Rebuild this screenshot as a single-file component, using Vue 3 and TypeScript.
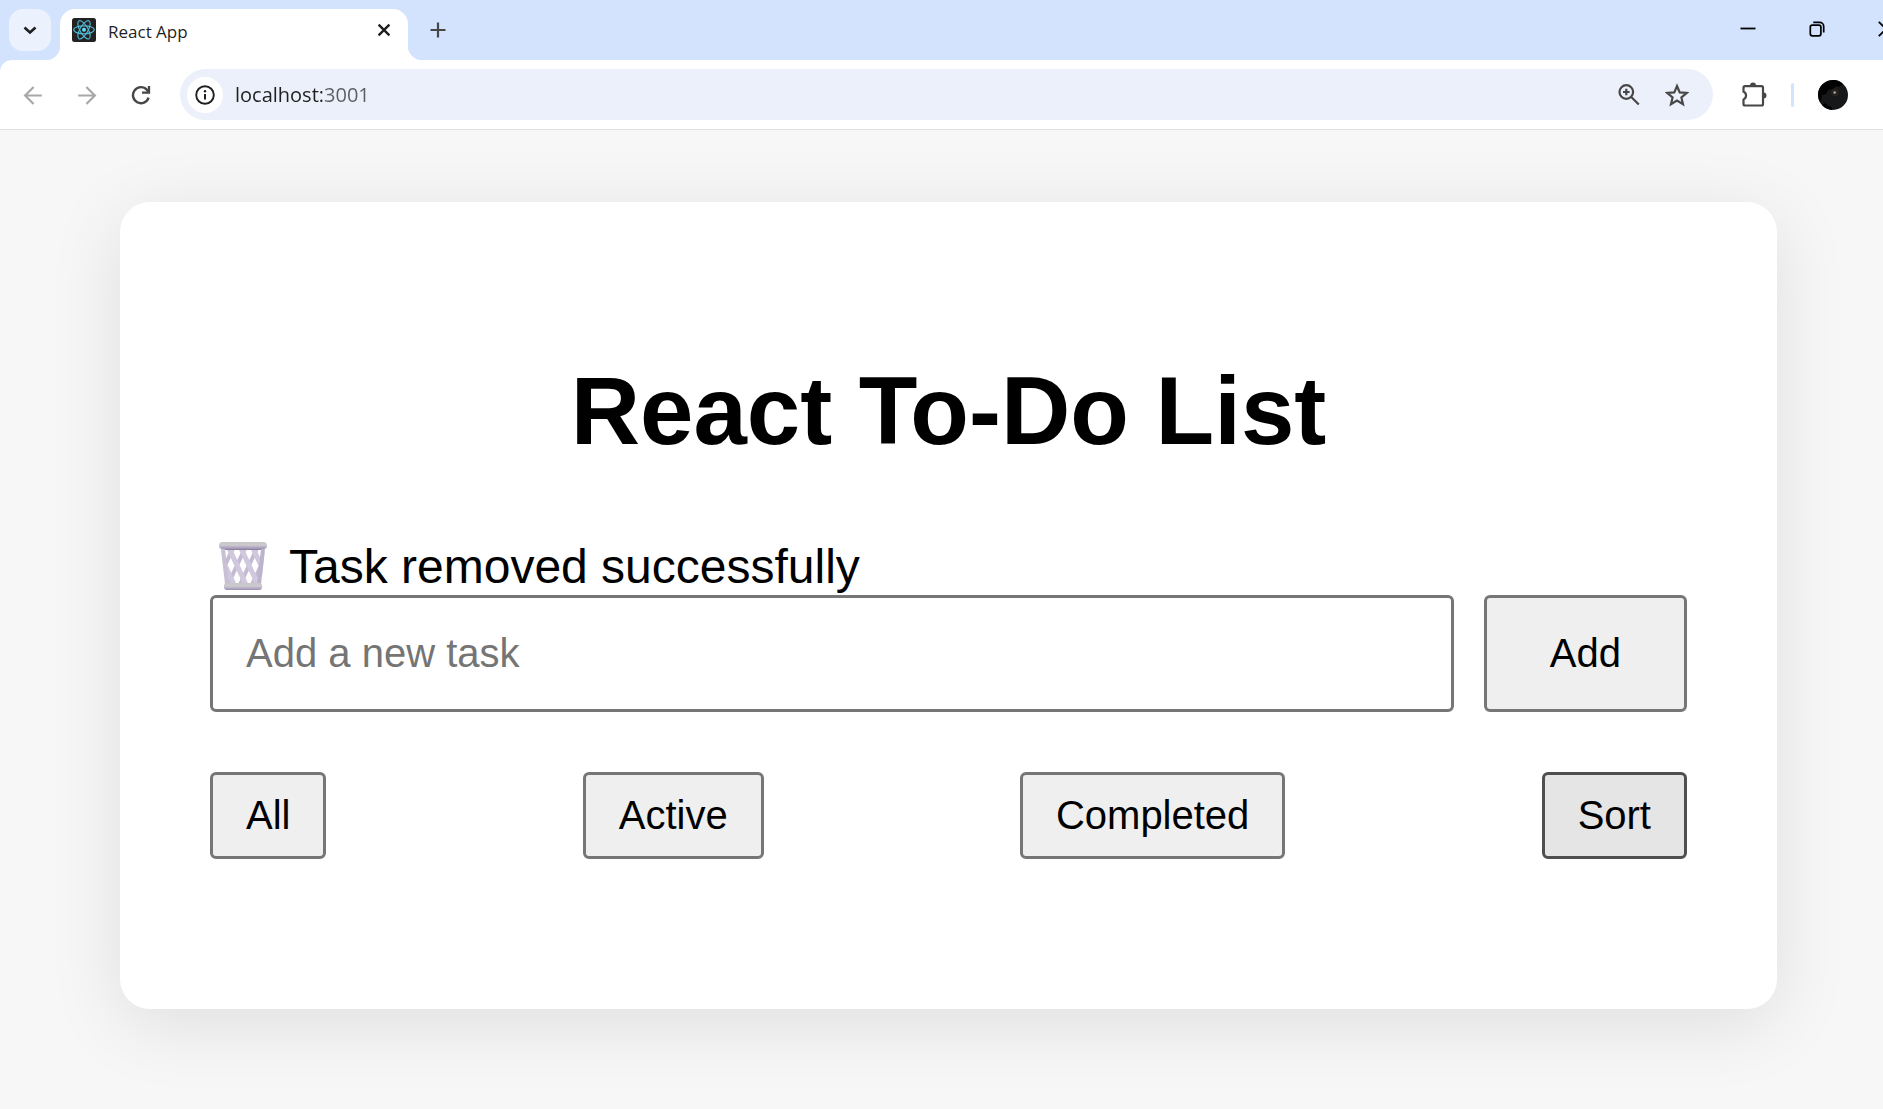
<script setup lang="ts">
import { ref } from 'vue'

type Filter = 'All' | 'Active' | 'Completed' | 'Sort'

const filters: Filter[] = ['All', 'Active', 'Completed', 'Sort']
const current = ref<Filter>('Sort')
const draft = ref('')
const address = ref('localhost:3001')

// Start positions of the crossing wires in the wastebasket mesh
const wires = [6, 18, 30, 42]
</script>

<template>
  <div class="window">
    <header class="tabstrip">
      <button class="tab-search" aria-label="Search tabs">
        <svg width="14" height="14" viewBox="0 0 14 14"><path d="M1.5 4.500l5.500 5 5.500-5" fill="none" stroke="#1f1f1f" stroke-width="2.6" /></svg>
      </button>
      <div class="tab">
        <svg class="favicon" width="24" height="24" viewBox="0 0 24 24">
          <rect width="24" height="24" rx="2.5" fill="#222" />
          <g fill="none" stroke="#50b9d3" stroke-width="1.15">
            <ellipse cx="12" cy="11.8" rx="10.3" ry="4" />
            <ellipse cx="12" cy="11.8" rx="10.3" ry="4" transform="rotate(60 12 11.8)" />
            <ellipse cx="12" cy="11.8" rx="10.3" ry="4" transform="rotate(120 12 11.8)" />
          </g>
          <circle cx="12" cy="11.8" r="2" fill="#61dafb" />
        </svg>
        <span class="tab-title">React App</span>
        <button class="icon-btn tab-close" aria-label="Close tab">
          <svg width="14" height="14" viewBox="0 0 14 14"><path d="M1.600 1.600l10.800 10.800M12.400 1.600L1.600 12.400" stroke="#1f1f1f" stroke-width="2.400" /></svg>
        </button>
      </div>
      <button class="icon-btn new-tab" aria-label="New tab">
        <svg width="16" height="16" viewBox="0 0 16 16"><path d="M8 .5v15M.5 8h15" stroke="#474747" stroke-width="2.2" /></svg>
      </button>
      <div class="controls">
        <button class="control" aria-label="Minimize">
          <svg width="16" height="16" viewBox="0 0 16 16"><path d="M.5 7.500h15" stroke="#000" stroke-width="1.8" /></svg>
        </button>
        <button class="control" aria-label="Restore">
          <svg width="16" height="16" viewBox="0 0 16 16" fill="none" stroke="#000" stroke-width="1.7">
            <rect x="1.3" y="4.2" width="10.6" height="10.6" rx="2" />
            <path d="M4.3 1.4h6.4a4 4 0 0 1 4 4v6.2" />
          </svg>
        </button>
        <button class="control" aria-label="Close">
          <svg width="16" height="16" viewBox="0 0 16 16"><path d="M.8.8l14.4 14.4M15.2.8L.8 15.2" stroke="#000" stroke-width="1.8" /></svg>
        </button>
      </div>
    </header>

    <nav class="toolbar">
      <button class="icon-btn nav-btn" aria-label="Back">
        <svg width="20" height="20" viewBox="0 0 20 20"><path d="M18.800 10.500H2.500M10.600 2l-8.500 8.500 8.500 8.500" fill="none" stroke="#a8a8a8" stroke-width="2.200" /></svg>
      </button>
      <button class="icon-btn nav-btn" aria-label="Forward">
        <svg width="20" height="20" viewBox="0 0 20 20"><path d="M1.200 10.500h16.300M9.400 2l8.500 8.500-8.500 8.500" fill="none" stroke="#a8a8a8" stroke-width="2.200" /></svg>
      </button>
      <button class="icon-btn nav-btn" aria-label="Reload">
        <svg width="20" height="20" viewBox="0 0 20 20">
          <path d="M17.600 12.600A8 8 0 1 1 16 4.900l1.600 1.800" fill="none" stroke="#474747" stroke-width="2.400" />
          <path d="M18 1V7.600h-7" fill="none" stroke="#474747" stroke-width="2.300" />
        </svg>
      </button>
      <div class="omnibox">
        <button class="site-info" aria-label="View site information">
          <svg width="20" height="20" viewBox="0 0 20 20">
            <circle cx="10" cy="10" r="8.800" fill="none" stroke="#1f1f1f" stroke-width="1.900" />
            <path d="M10 9v5.600" stroke="#1f1f1f" stroke-width="2" />
            <circle cx="10" cy="6.300" r="1.200" fill="#1f1f1f" />
          </svg>
        </button>
        <input v-model="address" class="address" type="text" aria-label="Address" spellcheck="false" />
        <button class="icon-btn box-btn" aria-label="Zoom">
          <svg width="24" height="24" viewBox="0 0 24 24" fill="none" stroke="#474747" stroke-width="2.200">
            <circle cx="9.300" cy="9" r="6.800" />
            <path d="M14 13.700l7.800 7.800M9.300 5.700v6.600M6 9h6.600" />
          </svg>
        </button>
        <button class="icon-btn box-btn" aria-label="Bookmark this tab">
          <svg width="24" height="24" viewBox="0 0 24 24" fill="none" stroke="#474747" stroke-width="2.200">
            <path d="M12 3l2.700 6.400 6.900.6-5.200 4.500 1.600 6.700-6-3.600-6 3.600 1.600-6.700L2.400 10l6.900-.6z" />
          </svg>
        </button>
      </div>
      <button class="icon-btn extensions" aria-label="Extensions">
        <svg width="26" height="26" viewBox="0 0 26 26">
          <path d="M4 4.200h16.500a1.500 1.500 0 0 1 1.500 1.500v16.300a1.500 1.500 0 0 1-1.500 1.500H4a1.500 1.500 0 0 1-1.500-1.500v-4.600a4.100 4.100 0 0 0 0-7.600V5.700A1.500 1.500 0 0 1 4 4.200z" fill="none" stroke="#474747" stroke-width="2.200" stroke-linejoin="round" />
          <path d="M9 3.500a3 3 0 0 1 6 0zM22.500 10.600a3 3 0 0 1 0 6z" fill="#474747" />
        </svg>
      </button>
      <span class="divider"></span>
      <button class="icon-btn profile" aria-label="Profile">
        <svg width="30" height="30" viewBox="0 0 30 30">
          <circle cx="15" cy="15" r="15" fill="#17181a" />
          <path d="M0 15a15 15 0 0 1 25-11l-4 3-3-1-3 3-5 1-2 4-4 1-1 6-2-1z" fill="#020202" />
          <path d="M4 25l3-2 3 3 4 1v3a15 15 0 0 1-10-5z" fill="#030303" />
          <circle cx="17" cy="12.500" r="4" fill="#24211f" />
          <circle cx="16.700" cy="12.500" r="1.300" fill="#b5a698" />
        </svg>
      </button>
    </nav>

    <main class="page">
      <section class="card">
        <h1>React To-Do List</h1>
        <p class="message" role="status">
          <svg class="bin" width="66" height="52" viewBox="0 0 66 52" aria-hidden="true">
            <defs>
              <clipPath id="mesh"><path d="M11 7h44l-4 38H16z" /></clipPath>
              <linearGradient id="rim" x1="0" y1="0" x2="0" y2="1">
                <stop offset="0" stop-color="#c9c6c9" />
                <stop offset="0.45" stop-color="#cdcad0" />
                <stop offset="1" stop-color="#9d90b5" />
              </linearGradient>
            </defs>
            <g clip-path="url(#mesh)" fill="none">
              <path v-for="x in wires" :key="'b' + x" :d="`M${x + 18} 5L${x - 2} 48`" stroke="#c3bad3" stroke-width="4" />
              <path v-for="x in wires" :key="'f' + x" :d="`M${x} 5l20 43`" stroke="#d0c9de" stroke-width="5" />
              <path d="M12 8h42" stroke="#8f84a0" stroke-width="2" />
            </g>
            <path d="M13 8l4 35" stroke="#c8c1d5" stroke-width="4" />
            <path d="M53 8l-4 35" stroke="#bdb3ce" stroke-width="4" />
            <rect x="9" y="1" width="48" height="7" rx="3.500" fill="url(#rim)" />
            <rect x="14" y="42" width="38" height="7" rx="3" fill="url(#rim)" />
          </svg>
          <span>Task removed successfully</span>
        </p>
        <form class="entry" @submit.prevent="draft = ''">
          <input v-model="draft" type="text" placeholder="Add a new task" aria-label="New task" />
          <button type="submit">Add</button>
        </form>
        <div class="filters">
          <button
            v-for="name in filters"
            :key="name"
            type="button"
            :class="{ selected: name === current }"
            @click="current = name"
          >{{ name }}</button>
        </div>
      </section>
    </main>
  </div>
</template>

<style>
body {
  margin: 0;
  overflow-x: hidden;
}
</style>

<style scoped>
.window {
  display: flex;
  flex-direction: column;
  min-height: 100vh;
  overflow: hidden;
  background: #d3e3fd;
  font-family: "Liberation Sans", Arial, sans-serif;
  color: #000;
}
button,
input {
  margin: 0;
  font-family: inherit;
  box-sizing: border-box;
}
svg {
  display: block;
  flex: none;
}
.icon-btn,
.control,
.tab-search,
.site-info {
  display: flex;
  align-items: center;
  justify-content: center;
  flex: none;
  padding: 0;
  border: 0;
  background: none;
}
.tabstrip {
  display: flex;
  height: 60px;
  padding-left: 9px;
}
.tab-search {
  width: 42px;
  height: 42px;
  margin-top: 9px;
  border-radius: 14px;
  background: #ebf2fe;
}
.tab {
  position: relative;
  display: flex;
  align-items: center;
  width: 348px;
  height: 51px;
  margin: 9px 0 0 9px;
  padding: 0 16px 9px 12px;
  box-sizing: border-box;
  border-radius: 15px 15px 0 0;
  background: #fff;
}
.tab::before,
.tab::after {
  content: "";
  position: absolute;
  bottom: 0;
  width: 15px;
  height: 15px;
}
.tab::before {
  right: 100%;
  background: radial-gradient(circle at 0 0, transparent 15px, #fff 16px);
}
.tab::after {
  left: 100%;
  background: radial-gradient(circle at 100% 0, transparent 15px, #fff 16px);
}
.tab-title {
  flex: 1;
  margin: 4px 0 0 12px;
  font: 17px/24px "Open Sans", "Noto Sans", sans-serif;
  color: #1f1f1f;
}
.tab-close {
  width: 16px;
  height: 16px;
}
.new-tab {
  width: 30px;
  height: 60px;
  margin-left: 15px;
}
.controls {
  display: flex;
  margin: 0 -37px 0 auto;
}
.control {
  width: 69px;
  height: 58px;
}
.toolbar {
  display: flex;
  align-items: center;
  height: 69px;
  padding: 0 35px 0 6px;
  border-bottom: 1px solid #dfe0e2;
  border-radius: 12px 0 0 0;
  background: #fff;
}
.nav-btn {
  width: 54px;
  height: 54px;
}
.omnibox {
  display: flex;
  align-items: center;
  flex: 1;
  height: 51px;
  margin-left: 12px;
  padding: 0 12px 0 7px;
  box-sizing: border-box;
  border-radius: 26px;
  background: #ecf0fa;
}
.site-info {
  width: 36px;
  height: 36px;
  border-radius: 50%;
  background: #fff;
}
.address {
  flex: 1;
  min-width: 0;
  height: 30px;
  margin-left: 12px;
  padding: 0;
  border: 0;
  outline: 0;
  font: 20px/30px "Open Sans", "Noto Sans", sans-serif;
  color: transparent;
  caret-color: #1f1f1f;
  background: linear-gradient(90deg, #1f1f1f 87px, #5a5d61 87px);
  background-clip: text;
}
.box-btn {
  width: 48px;
  height: 48px;
}
.extensions {
  width: 48px;
  height: 48px;
  margin-left: 17px;
}
.divider {
  width: 3px;
  height: 24px;
  margin: 0 24px 0 13px;
  border-radius: 2px;
  background: #d3e3fd;
}
.profile {
  width: 30px;
  height: 30px;
}
.page {
  flex: 1;
  padding: 72px 106px 100px 120px;
  background: #f7f7f7;
}
.card {
  padding: 90px;
  border-radius: 30px;
  background: #fff;
  box-shadow: 0 15px 75px rgba(0, 0, 0, 0.1);
}
h1 {
  margin: 0;
  padding: 64px 0;
  font-size: 96px;
  line-height: 110px;
  text-align: center;
}
.message {
  display: flex;
  align-items: center;
  gap: 13px;
  margin: 0;
  padding: 9px 0 1px;
  font-size: 48px;
  line-height: 55px;
}
.entry {
  display: flex;
  gap: 30px;
  margin-bottom: 60px;
}
.entry input,
.entry button,
.filters button {
  border: 3px solid #767676;
  border-radius: 6px;
  font-size: 40px;
  line-height: 45px;
  color: #000;
}
.entry input {
  flex: 1;
  min-width: 0;
  height: 117px;
  padding: 0 33px;
  background: #fff;
}
.entry input::placeholder {
  color: #757575;
}
.entry button {
  padding: 0 63px;
  background: #efefef;
}
.filters {
  display: flex;
  justify-content: space-between;
  margin-bottom: 60px;
}
.filters button {
  padding: 18px 33px;
  background: #efefef;
}
.filters button.selected {
  border-color: #4f4f4f;
  background: #e5e5e5;
}
</style>
